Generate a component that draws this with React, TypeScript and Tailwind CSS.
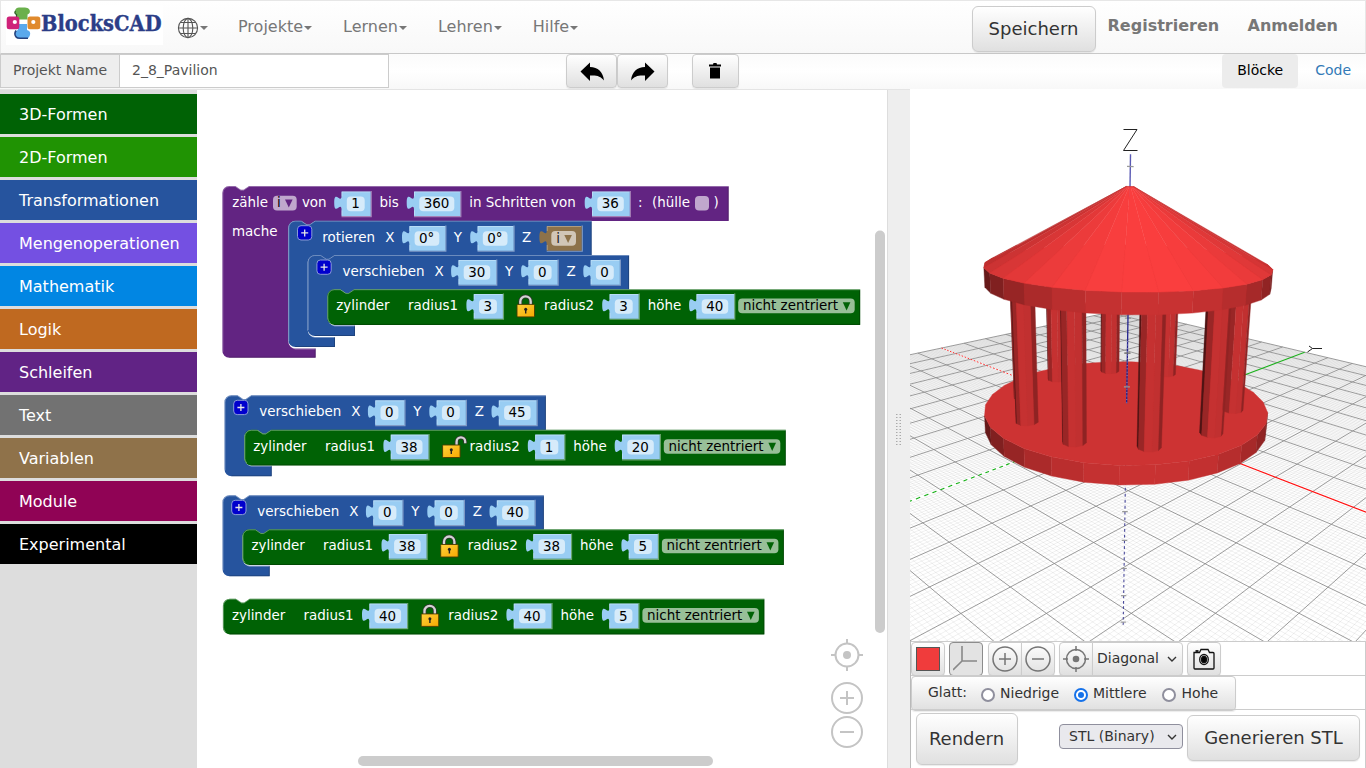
import React from "react";

/* ---------- 3D view: camera and projection ---------- */

const FOCAL = 666.3;
const CX = 1138;
const CY = 365;
const AZ = (43.5 * Math.PI) / 180;
const CA = Math.cos(AZ);
const SA = Math.sin(AZ);
const ST = 0.9527;
const CT = 0.304;
const SB = 0.0197;

type V3 = [number, number, number];
type P2 = [number, number];

function rotate([x, y, z]: V3): V3 {
  const x1 = x * CA + y * SA;
  const y1 = -x * SA + y * CA;
  const x2 = x1 + z * SB;
  const z2 = z - x1 * SB;
  return [x2, y1 * CT + z2 * ST, -y1 * ST + z2 * CT];
}

function project(p: V3): P2 {
  const [x, y, z] = rotate(p);
  const depth = 192.3 - z;
  return [CX + (FOCAL * (x - 3.35)) / depth, CY - (FOCAL * (y - 15.73)) / depth];
}

const pt = (p: V3) => {
  const [x, y] = project(p);
  return `${x.toFixed(2)},${y.toFixed(2)}`;
};

const seg = (a: V3, b: V3) => `M${pt(a)}L${pt(b)}`;

function shade(n: V3): string {
  const [x, y, z] = rotate(n);
  const i = Math.max(0.25, Math.min(1, 0.287 + 0.09 * x + 0.351 * y + 0.65 * z));
  return `rgb(${Math.round(250 * i)},${Math.round(62 * i)},${Math.round(62 * i)})`;
}

interface Face {
  pts: string;
  fill: string;
}

function frustum(cx: number, cy: number, z0: number, z1: number, r0: number, r1: number, sides: number, turn: number): Face[] {
  const faces: Face[] = [];
  const at = (k: number, r: number, z: number): V3 => {
    const a = turn + (k * 2 * Math.PI) / sides;
    return [cx + r * Math.cos(a), cy + r * Math.sin(a), z];
  };
  for (let k = 0; k < sides; k++) {
    const q = [at(k, r0, z0), at(k + 1, r0, z0), at(k + 1, r1, z1), at(k, r1, z1)];
    const s = q.map(project);
    let area = 0;
    s.forEach((a, j) => {
      const b = s[(j + 1) % 4];
      area += a[0] * b[1] - b[0] * a[1];
    });
    if (area >= 0) continue;
    const mid = turn + ((k + 0.5) * 2 * Math.PI) / sides;
    const dz = z1 - z0;
    const dr = r0 - r1;
    const len = Math.hypot(dz, dr);
    faces.push({
      pts: q.map(pt).join(" "),
      fill: shade([(Math.cos(mid) * dz) / len, (Math.sin(mid) * dz) / len, dr / len]),
    });
  }
  const top: V3[] = Array.from({ length: sides }, (_, k) => at(k, r1, z1));
  faces.push({ pts: top.map(pt).join(" "), fill: shade([0, 0, 1]) });
  return faces;
}

function Solid({ faces }: { faces: Face[] }) {
  return (
    <g>
      {faces.map((f, i) => (
        <polygon key={i} points={f.pts} fill={f.fill} stroke={f.fill} strokeWidth="0.4" strokeLinejoin="round" />
      ))}
    </g>
  );
}

const range = (a: number, b: number, step = 1) => {
  const out: number[] = [];
  for (let v = a; v <= b; v += step) out.push(v);
  return out;
};

const minorGrid = range(-100, 100)
  .filter((v) => v % 10 !== 0)
  .map((v) => seg([v, -100, 0], [v, 100, 0]) + seg([-100, v, 0], [100, v, 0]))
  .join("");
const majorGrid = range(-100, 100, 10)
  .filter((v) => v !== 0)
  .map((v) => seg([v, -100, 0], [v, 100, 0]) + seg([-100, v, 0], [100, v, 0]))
  .join("");

const base = frustum(0, 0, 0, 5, 39.8, 39.8, 30, 0);
const rim = frustum(0, 0, 40, 45, 38, 38, 30, 0);
const roof = frustum(0, 0, 45, 65, 38, 1, 30, 0);
const columns = range(1, 360, 36)
  .map((deg) => {
    const a = (deg * Math.PI) / 180;
    const x = 30 * Math.cos(a);
    const y = 30 * Math.sin(a);
    return { near: rotate([x, y, 0])[2], faces: frustum(x, y, 5, 40, 3, 3, 10, a) };
  })
  .sort((p, q) => p.near - q.near);

function Scene() {
  return (
    <svg className="block h-[552px] w-[456px] bg-white" viewBox="910 89 456 552">
      <path d={minorGrid} stroke="#000" strokeOpacity="0.08" strokeWidth="0.8" fill="none" />
      <path d={majorGrid} stroke="#8a8a8a" strokeOpacity="0.85" strokeWidth="1" fill="none" />
      <path d={range(-99, -1, 2).map((v) => seg([v - 1, 0, 0], [v, 0, 0])).join("")} stroke="#ff3030" strokeWidth="1" />
      <path d={range(-99, -1, 2).map((v) => seg([0, v - 1, 0], [0, v, 0])).join("")} stroke="#10b010" strokeWidth="1.1" />
      <path d={seg([0, 0, 0], [100, 0, 0])} stroke="#ff1010" strokeWidth="1.2" />
      <path d={seg([0, 0, 0], [0, 100, 0])} stroke="#20b020" strokeWidth="1.2" />
      <path d={range(-71, -1, 2).map((v) => seg([0, 0, v], [0, 0, v + 1])).join("")} stroke="#4a4a9c" strokeWidth="1.1" />
      <path d={seg([0, 0, 60], [0, 0, 73])} stroke="#5a5ab4" strokeWidth="1.4" />
      {range(-70, 70, 10).map((v) => (
        <path key={v} d={seg([-0.6, -0.6, v], [0.6, 0.6, v])} stroke="#999" strokeWidth="1.2" />
      ))}
      <path d="M1123.500 129.500h13.500l-13.500 21h14" stroke="#222" strokeWidth="1" fill="none" />
      <path d="M1322 348.500h-9.500l-5 3.500M1312.500 348.500l-3.500-2.500" stroke="#222" strokeWidth="1" fill="none" />
      <Solid faces={base} />
      <path d={seg([0, 0, 5], [0, 0, 40])} stroke="#25258f" strokeWidth="1.3" />
      <path d={seg([0, 0, 5], [0, 0, 24])} stroke="#a0a0c8" strokeOpacity="0.6" strokeWidth="1.400" strokeDasharray="1 2.400" />
      <path d={seg([-0.6, -0.6, 10], [0.6, 0.6, 10])} stroke="#999" strokeWidth="1.200" />
      <path d={seg([-0.6, -0.6, 20], [0.6, 0.6, 20])} stroke="#777" strokeWidth="1.200" />
      {columns.map((c, i) => (
        <Solid key={i} faces={c.faces} />
      ))}
      <Solid faces={rim} />
      <Solid faces={roof} />
    </svg>
  );
}

/* ---------- Block workspace ---------- */

const FONT = '"DejaVu Sans", sans-serif';
const BLUE = "#26549e";
const GREEN = "#006205";
const PURPLE = "#622482";

function T({ x, y, children, fill = "#fff" }: { x: number; y: number; children: React.ReactNode; fill?: string }) {
  return (
    <text x={x + 0.5} y={y} fill={fill} fontSize="13.45" fontFamily={FONT} xmlSpace="preserve">
      {children}
    </text>
  );
}

const NOTCH = "l5.500 3.700h2.800l5.500-3.700";
const NOTCH_BACK = "l-5.500 3.700h-2.800l-5.500-3.700";

interface CShape {
  x: number;
  y: number;
  right: number;
  head: number;
  inner: number;
  armTop: number;
  bottom: number;
  armRight: number;
  color: string;
}

function CBlock({ x, y, right, head, inner, armTop, bottom, armRight, color }: CShape) {
  const d =
    `M${x} ${y + 7}a7 7 0 0 1 7-7h6${NOTCH}H${right}V${head + 0.5}H${inner + 26.8}${NOTCH_BACK}H${inner + 7}a7 7 0 0 0-7 7V${armTop - 7}` +
    `a7 7 0 0 0 7 7H${armRight}V${bottom}H${x + 7}a7 7 0 0 1-7-7Z`;
  return (
    <g>
      <path d={d} fill={color} />
      <path d={`M${x + 0.5} ${bottom - 6}V${y + 7}a6.500 6.500 0 0 1 6.500-6.500h6${NOTCH}H${right}`} fill="none" stroke="#fff" strokeOpacity="0.32" />
      <path d={`M${inner + 2} ${armTop - 3}a7 7 0 0 0 5 3.500H${armRight}`} fill="none" stroke="#fff" strokeOpacity="0.35" />
      <path d={`M${right - 0.5} ${y + 1}V${head}M${armRight - 0.5} ${armTop}V${bottom - 0.5}H${x + 7}`} fill="none" stroke="#000" strokeOpacity="0.2" />
    </g>
  );
}

function FlatBlock({ x, y, right, bottom, color }: { x: number; y: number; right: number; bottom: number; color: string }) {
  return (
    <g>
      <path d={`M${x} ${y + 7}a7 7 0 0 1 7-7h6${NOTCH}H${right}V${bottom}H${x + 7}a7 7 0 0 1-7-7Z`} fill={color} />
      <path
        d={`M${x + 2.5} ${bottom - 2.5}a7 7 0 0 1-2-4.500V${y + 7}a6.500 6.500 0 0 1 6.500-6.500h6${NOTCH}H${right}`}
        fill="none"
        stroke="#fff"
        strokeOpacity="0.36"
      />
      <path d={`M${right - 0.5} ${y + 1}V${bottom - 0.5}H${x + 7}`} fill="none" stroke="#000" strokeOpacity="0.25" />
    </g>
  );
}

function Plug({ x, y, w, color, children }: { x: number; y: number; w: number; color: string; children?: React.ReactNode }) {
  const d = `M${x} ${y}h${w}v24.700h${-w}v-6.500c0-9.200-7.300 7.300-7.300-6.900s7.300 2.300 7.300-6.900Z`;
  return (
    <g>
      <path d={`M${x} ${y + 25.2}h${w + 0.5}v${-25.7}`} fill="none" stroke="#fff" strokeOpacity="0.42" strokeWidth="1.3" />
      <path d={d} fill={color} />
      <path d={`M${x + 0.5} ${y + 24}v-5M${x + 0.5} ${y + 5}v-4.500h${w - 1}`} fill="none" stroke="#fff" strokeOpacity="0.3" />
      {children}
    </g>
  );
}

const plugWidth = (v: string) => (v.endsWith("°") ? 36 : v.length === 3 ? 46.3 : v.length === 2 ? 37.8 : 29.2);

function NumberPlug({ x, y, value }: { x: number; y: number; value: string }) {
  const w = plugWidth(value);
  return (
    <Plug x={x} y={y} w={w} color="#99cdf3">
      <rect x={x + 5.3} y={y + 5.2} width={w - 11.3} height="14.600" rx="4" fill="#d6ebfa" />
      <text x={x + w / 2 - 0.6} y={y + 17} textAnchor="middle" fill="#000" fontSize="13.45" fontFamily={FONT}>
        {value}
      </text>
    </Plug>
  );
}

function Plus({ x, y }: { x: number; y: number }) {
  return (
    <g>
      <rect x={x + 0.5} y={y + 0.5} width="14.300" height="14.300" rx="3.500" fill="#0000cd" stroke="#8a9ad8" />
      <path d={`M${x + 4.2} ${y + 7.7}h7M${x + 7.7} ${y + 4.2}v7`} stroke="#e6e6e6" strokeWidth="1.300" />
    </g>
  );
}

function Lock({ x, y, open = false }: { x: number; y: number; open?: boolean }) {
  return (
    <g transform={`translate(${x} ${y})`}>
      <g fill="none">
        <path
          d={open ? "M14.500 9.500V6.200a4.300 4.300 0 0 1 8.600 0V8" : "M3.800 10V6.700a5.200 5.200 0 0 1 10.400 0V10"}
          stroke="#333"
          strokeWidth="3.800"
        />
        <path
          d={open ? "M14.500 9.500V6.200a4.300 4.300 0 0 1 8.600 0V7.700" : "M3.800 10V6.700a5.200 5.200 0 0 1 10.400 0V10"}
          stroke="#d4d4d4"
          strokeWidth="2.300"
        />
      </g>
      <rect x="0.500" y="9.500" width="17.500" height="12.500" rx="0.800" fill="url(#gold)" stroke="#4a3a00" strokeWidth="0.900" />
      <circle cx="9.200" cy="14.300" r="1.500" fill="#222" />
      <path d="M9.200 14.500v4" stroke="#222" strokeWidth="1.400" />
    </g>
  );
}

function Cylinder({ x, y, r1, r2, h, open = false, height = 35.7 }: { x: number; y: number; r1: string; r2: string; h: string; open?: boolean; height?: number }) {
  const p1 = x + 146.4;
  const e1 = p1 + plugWidth(r1);
  const p2 = e1 + 106.6;
  const e2 = p2 + plugWidth(r2);
  const p3 = e2 + 57.7;
  const dd = p3 + plugWidth(h) + 4;
  const by = y + 20.8;
  return (
    <g>
      <FlatBlock x={x} y={y} right={dd + 122} bottom={y + height} color={GREEN} />
      <T x={x + 8.5} y={by}>zylinder</T>
      <T x={x + 80.1} y={by}>radius1</T>
      <NumberPlug x={p1} y={y + 4.8} value={r1} />
      <Lock x={e1 + 13.6} y={y + 5.7} open={open} />
      <T x={e1 + 40.6} y={by}>radius2</T>
      <NumberPlug x={p2} y={y + 4.8} value={r2} />
      <T x={e2 + 8.5} y={by}>höhe</T>
      <NumberPlug x={p3} y={y + 4.8} value={h} />
      <rect x={dd} y={y + 9.4} width="116.500" height="14.600" rx="4" fill="#98bf98" />
      <T x={dd + 4.2} y={by} fill="#000">nicht zentriert</T>
      <path d={`M${dd + 104.6} ${y + 13}h7.600l-3.800 8.200z`} fill={GREEN} />
    </g>
  );
}

function Translate({ x, y, vx, vy, vz }: { x: number; y: number; vx: string; vy: string; vz: string }) {
  const p1 = x + 150.7;
  const e1 = p1 + plugWidth(vx);
  const p2 = e1 + 32.2;
  const e2 = p2 + plugWidth(vy);
  const p3 = e2 + 33;
  const e3 = p3 + plugWidth(vz);
  const by = y + 20.8;
  return (
    <g>
      <CBlock x={x} y={y} right={e3 + 9.3} head={y + 34.3} inner={x + 20} armTop={y + 70.5} bottom={y + 81} armRight={x + 47.3} color={BLUE} />
      <Plus x={x + 8.7} y={y + 4.5} />
      <T x={x + 34.3} y={by}>verschieben</T>
      <T x={x + 126.2} y={by}>X</T>
      <NumberPlug x={p1} y={y + 5} value={vx} />
      <T x={e1 + 8.4} y={by}>Y</T>
      <NumberPlug x={p2} y={y + 5} value={vy} />
      <T x={e2 + 8.4} y={by}>Z</T>
      <NumberPlug x={p3} y={y + 5} value={vz} />
    </g>
  );
}

function Workspace() {
  return (
    <svg className="block h-[678px] w-[690px]" viewBox="197 90 690 678">
      <defs>
        <linearGradient id="gold" x1="0" y1="0" x2="1" y2="1">
          <stop offset="0" stopColor="#ffd23c" />
          <stop offset="1" stopColor="#f7a800" />
        </linearGradient>
      </defs>

      <CBlock x={222.3} y={186} right={728.7} head={220.5} inner={288.3} armTop={348.5} bottom={357.7} armRight={315.7} color={PURPLE} />
      <T x={231.8} y={207}>zähle</T>
      <rect x="273" y="195.800" width="23.700" height="14.600" rx="4" fill="#c0a7cd" />
      <T x={276.5} y={207} fill="#000">i</T>
      <path d="M285 199.500h7.600l-3.800 8z" fill={PURPLE} />
      <T x={301.4} y={207}>von</T>
      <NumberPlug x={341.5} y={191.4} value="1" />
      <T x={379} y={207}>bis</T>
      <NumberPlug x={414} y={191.4} value="360" />
      <T x={468.8} y={207}>in Schritten von</T>
      <NumberPlug x={592} y={191.4} value="36" />
      <T x={637.5} y={207}>:</T>
      <T x={651.6} y={207}>(hülle</T>
      <rect x="695" y="195.900" width="14" height="14.700" rx="4" fill="#c0a7cd" />
      <T x={713} y={207}>)</T>
      <T x={231.5} y={236}>mache</T>

      <CBlock x={288.3} y={220.7} right={591.7} head={255} inner={307.7} armTop={337} bottom={347} armRight={335} color={BLUE} />
      <Plus x={297} y={225.2} />
      <T x={321.7} y={242}>rotieren</T>
      <T x={384.7} y={242}>X</T>
      <NumberPlug x={409.3} y={226} value="0°" />
      <T x={453.3} y={242}>Y</T>
      <NumberPlug x={477.5} y={226} value="0°" />
      <T x={521.6} y={242}>Z</T>
      <Plug x={546.7} y={226} w={35} color="#8d724a">
        <rect x="551.300" y="231" width="24.700" height="14.700" rx="4" fill="#d1c6b7" />
        <T x={555.8} y={243} fill="#222">i</T>
        <path d="M564.300 235h7.600l-3.800 8z" fill="#8d724a" />
      </Plug>

      <Translate x={307.7} y={255} vx="30" vy="0" vz="0" />
      <Cylinder x={327.3} y={289.2} r1="3" r2="3" h="40" />

      <Translate x={224.5} y={395.3} vx="0" vy="0" vz="45" />
      <Cylinder x={244.3} y={429.8} r1="38" r2="1" h="20" open />

      <Translate x={222.5} y={495.3} vx="0" vy="0" vz="40" />
      <Cylinder x={242.4} y={529.3} r1="38" r2="38" h="5" />

      <Cylinder x={222.9} y={598.7} r1="40" r2="40" h="5" />

      <g fill="none" stroke="#c4c4c4" strokeWidth="2">
        <circle cx="847" cy="655" r="11.500" />
        <circle cx="847" cy="655" r="4" fill="#c4c4c4" stroke="none" />
        <path d="M847 639v5M847 666v5M831 655h5M858 655h5" />
        <circle cx="847" cy="698" r="15" />
        <path d="M840 698h14M847 691v14" />
        <circle cx="847" cy="732" r="15" />
        <path d="M840 732h14" />
      </g>
      <rect x="875" y="230.500" width="10" height="402.500" rx="5" fill="#ccc" />
      <rect x="358" y="756" width="355" height="10" rx="5" fill="#ccc" />
    </svg>
  );
}

/* ---------- Page chrome ---------- */

const categories: [string, string][] = [
  ["3D-Formen", "bg-[#006205]"],
  ["2D-Formen", "bg-[#209303]"],
  ["Transformationen", "bg-[#26549e]"],
  ["Mengenoperationen", "bg-[#7450e2]"],
  ["Mathematik", "bg-[#0186e3]"],
  ["Logik", "bg-[#bf6920]"],
  ["Schleifen", "bg-[#612385]"],
  ["Text", "bg-[#727272]"],
  ["Variablen", "bg-[#8f724a]"],
  ["Module", "bg-[#900355]"],
  ["Experimental", "bg-black"],
];

const BTN = "flex items-center justify-center border border-[#ccc] bg-gradient-to-b from-white to-[#e0e0e0] text-[#333] shadow-[0_1px_1px_rgba(0,0,0,0.08)]";

function Caret() {
  return <span className="ml-[1px] mt-[2px] border-x-4 border-t-4 border-x-transparent border-t-[#777]" />;
}

function Logo() {
  return (
    <svg className="block h-[40px] w-[157px] overflow-visible bg-white" viewBox="6 5 157 40">
      <path d="M15 10.500q-1.500 3 1.500 4v5h11v-5q4-2 1.500-5.500-1-1.500-4-1.500h-6q-3 0-4 3z" fill="#6ab04c" />
      <path d="M15.500 11q-1.500 2.500 1 3.500v4" fill="none" stroke="#2f5a26" strokeWidth="1.200" />
      <path d="M17 24h10v6q4 1 3 5-1 3.500-4 3.500h-7q-4 0-4-4t3-4.500z" fill="#5aa9ec" />
      <path d="M16 30.500q-2.500 4 .5 6.800 1 .9 3.500 1h8" fill="none" stroke="#24427e" strokeWidth="1.600" />
      <rect x="6.700" y="16.500" width="12.600" height="12.800" rx="2.500" fill="#cf2279" />
      <circle cx="14.800" cy="22" r="2.100" fill="#fff" />
      <rect x="27.500" y="16.500" width="12.800" height="12.800" rx="2.500" fill="#e08a2c" />
      <circle cx="33.300" cy="22" r="2.100" fill="#fff" />
      <text x="41" y="31.300" textLength="120.500" lengthAdjust="spacingAndGlyphs" fill="#2b3d87" stroke="#2b3d87" strokeWidth="0.400" fontSize="22" fontWeight="700" fontFamily='"DejaVu Serif", serif'>
        BlocksCAD
      </text>
    </svg>
  );
}

function Globe() {
  return (
    <svg className="h-[22px] w-[22px]" viewBox="0 0 22 22" fill="none" stroke="#555" strokeWidth="1.100">
      <circle cx="11" cy="11" r="9.600" />
      <ellipse cx="11" cy="11" rx="4.800" ry="9.600" />
      <path d="M11 1.400v19.200M1.400 11h19.200M3.300 5.500h15.400M3.300 16.500h15.400" />
    </svg>
  );
}

const Chevron = () => (
  <svg className="h-[6px] w-[10px]" viewBox="0 0 10 6" fill="none" stroke="#333" strokeWidth="1.400">
    <path d="M1 1l4 4 4-4" />
  </svg>
);

function Radio({ on = false }: { on?: boolean }) {
  return on ? (
    <span className="mt-[3px] flex h-[14px] w-[14px] items-center justify-center rounded-full border-2 border-[#1672ea] bg-white">
      <span className="h-[6px] w-[6px] rounded-full bg-[#1672ea]" />
    </span>
  ) : (
    <span className="mt-[3px] h-[14px] w-[14px] rounded-full border-2 border-[#8f8f9d] bg-white" />
  );
}

export default function App() {
  return (
    <div className="flex h-[768px] w-[1366px] flex-col overflow-hidden bg-white font-['DejaVu_Sans',sans-serif] text-[14px] text-[#333]">
      <header className="flex h-[54px] shrink-0 border border-[#e7e7e7] border-b-[#c8c8c8] bg-gradient-to-b from-white to-[#f8f8f8] text-[16px] text-[#777]">
        <div className="ml-[5px] mt-[4px]">
          <Logo />
        </div>
        <div className="ml-[14px] mt-[16px] flex h-[22px] items-center">
          <Globe />
          <span className="-mt-[2px] flex"><Caret /></span>
        </div>
        <nav className="mt-[14px] flex h-[24px] items-center">
          <span className="ml-[30px] flex items-center">Projekte<Caret /></span>
          <span className="ml-[31px] flex items-center">Lernen<Caret /></span>
          <span className="ml-[31px] flex items-center">Lehren<Caret /></span>
          <span className="ml-[31px] flex items-center">Hilfe<Caret /></span>
        </nav>
        <div className="ml-auto flex">
          <button className={`${BTN} mt-[5px] h-[46px] w-[124px] rounded-[6px] pb-[2px] text-[18px]`}>Speichern</button>
          <span className="ml-[12px] mt-[13px] w-[112px] font-bold leading-[24px]">Registrieren</span>
          <span className="ml-[28px] mr-[27px] mt-[13px] font-bold leading-[24px]">Anmelden</span>
        </div>
      </header>

      <div className="flex h-[36px] shrink-0 border-b border-[#e4e4e4] bg-gradient-to-b from-[#fbfbfb] via-white to-[#f8f8f8]">
        <div className="flex h-[34px] w-[389px] border border-[#ccc] bg-white text-[#555]">
          <span className="flex w-[119px] items-center border-r border-[#ccc] bg-[#eee] pb-[2px] pl-[12px]">Projekt Name</span>
          <span className="flex items-center pb-[2px] pl-[12px]">2_8_Pavilion</span>
        </div>
        <div className="ml-[177px] flex h-[34px]">
          <button className={`${BTN} w-[51px] rounded-[4px]`}>
            <svg className="mt-[2px] h-[20px] w-[26px]" viewBox="0 0 26 20">
              <path d="M1.500 9.500L11 0.500V5c8 .5 13 4.500 14 13.500-3.500-4.500-7.500-5.500-14-5V19z" fill="#000" />
            </svg>
          </button>
          <button className={`${BTN} w-[51px] rounded-[4px]`}>
            <svg className="mt-[2px] h-[20px] w-[26px]" viewBox="0 0 26 20">
              <path d="M24.500 9.500L15 0.500V5C7 5.500 2 9.500 1 18.500c3.500-4.500 7.500-5.500 14-5V19z" fill="#000" />
            </svg>
          </button>
          <button className={`${BTN} ml-[24px] w-[47px] rounded-[4px] pr-px`}>
            <svg className="-mt-px h-[16px] w-[12px]" viewBox="0 0 12 16">
              <path d="M0 1.500h4l.5-1.500h3L8 1.500h4v2H0zM1 4.500h10v11H1z" fill="#000" />
            </svg>
          </button>
        </div>
        <div className="ml-auto flex h-[34px] pr-[15px]">
          <span className="flex w-[76px] items-center justify-center rounded-[4px] bg-[#ececec] pb-[2px] text-black">Blöcke</span>
          <span className="ml-[17px] flex items-center pb-[2px] text-[#337ab7]">Code</span>
        </div>
      </div>

      <div className="flex min-h-0 flex-1">
        <aside className="flex w-[197px] shrink-0 flex-col gap-[3px] bg-[#ddd] pt-[4px]">
          {categories.map(([name, color]) => (
            <div key={name} className={`flex h-[40px] items-center pl-[19px] pt-[2px] text-[16px] text-white ${color}`}>
              {name}
            </div>
          ))}
        </aside>
        <main className="w-[690px] shrink-0">
          <Workspace />
        </main>
        <div className="flex w-[23px] shrink-0 items-center justify-center border-l border-[#ddd] bg-[#eee]">
          <svg className="h-[31px] w-[6px]" viewBox="0 0 6 31">
            {range(0, 30, 3).map((v) => (
              <path key={v} d={`M0 ${v + 0.5}h1.500M3.500 ${v + 0.5}h1.500`} stroke="#aaa" />
            ))}
          </svg>
        </div>

        <section className="-mt-px flex w-[456px] shrink-0 flex-col bg-white">
          <Scene />
          <div className="flex flex-1 flex-col border-x border-[#bbb] border-r-[#ccc]">
            <div className="flex h-[34px] shrink-0 border-t border-[#ccc]">
              <button className={`${BTN} h-[34px] w-[34px] rounded-[4px]`}>
                <span className="h-[24px] w-[24px] border border-[#555] bg-[#f03c3c]" />
              </button>
              <button className="ml-[4px] flex h-[34px] w-[34px] items-center justify-center rounded-[4px] border border-[#8c8c8c] bg-[#e3e3e3]">
                <svg className="h-[26px] w-[26px]" viewBox="0 0 26 26" fill="none" stroke="#888" strokeWidth="1.600">
                  <path d="M9 0v15h15M9 15l-9 9" />
                </svg>
              </button>
              <button className={`${BTN} ml-[5px] h-[34px] w-[34px] rounded-l-[4px]`}>
                <svg className="h-[26px] w-[26px] shrink-0" viewBox="0 0 26 26" fill="none" stroke="#757575" strokeWidth="1.500">
                  <circle cx="13" cy="13" r="12" />
                  <path d="M7 13h12M13 7v12" />
                </svg>
              </button>
              <button className={`${BTN} -ml-px h-[34px] w-[34px] rounded-r-[4px]`}>
                <svg className="h-[26px] w-[26px] shrink-0" viewBox="0 0 26 26" fill="none" stroke="#757575" strokeWidth="1.500">
                  <circle cx="13" cy="13" r="12" />
                  <path d="M7 13h12" />
                </svg>
              </button>
              <button className={`${BTN} ml-[4px] h-[34px] w-[34px] rounded-l-[4px]`}>
                <svg className="h-[26px] w-[26px] shrink-0" viewBox="0 0 26 26" fill="none" stroke="#757575" strokeWidth="1.500">
                  <circle cx="13" cy="13" r="9.500" />
                  <circle cx="13" cy="13" r="3.300" fill="#757575" stroke="none" />
                  <path d="M13 0v5M13 21v5M0 13h5M21 13h5" />
                </svg>
              </button>
              <button className={`${BTN} -ml-px h-[34px] w-[91px] rounded-r-[4px] pr-px`}>
                <span className="pb-[2px]">Diagonal</span>
                <span className="ml-[8px] flex"><Chevron /></span>
              </button>
              <button className={`${BTN} ml-[4px] h-[34px] w-[34px] rounded-[4px] pr-px`}>
                <svg className="h-[22px] w-[22px] shrink-0" viewBox="0 0 22 22" fill="none" stroke="#111" strokeWidth="1.300">
                  <path d="M1 4.500h5.500L8 1.500h7l1.500 3H20a1 1 0 0 1 1 1V20a1 1 0 0 1-1 1H2a1 1 0 0 1-1-1z" />
                  <path d="M2.500 3h3" strokeWidth="1.800" />
                  <ellipse cx="11" cy="11.500" rx="4.300" ry="5" />
                  <ellipse cx="11" cy="11.500" rx="2.500" ry="3.200" fill="#000" />
                </svg>
              </button>
            </div>
            <div className="flex h-[34px] shrink-0 border-t border-[#ccc]">
              <div className={`${BTN} h-[35px] w-[325px] !justify-start rounded-[4px] pl-[16px]`}>
                <span className="pb-[2px]">Glatt:</span>
                <span className="ml-[14px] flex items-center gap-[5px]"><Radio /><span className="pb-px">Niedrige</span></span>
                <span className="ml-[15px] flex items-center gap-[5px]"><Radio on /><span className="pb-px">Mittlere</span></span>
                <span className="ml-[15px] flex items-center gap-[6px]"><Radio /><span className="pb-px">Hohe</span></span>
              </div>
            </div>
            <div className="flex flex-1 border-t border-[#ccc]">
              <button className={`${BTN} ml-[5px] mt-[3px] h-[52px] w-[102px] rounded-[6px] pb-[2px] pr-px text-[18px]`}>Rendern</button>
              <div className="ml-[41px] mt-[14px] flex h-[25px] w-[124px] items-center rounded-[4px] border border-[#8f8f9d] bg-[#e9e9ed] pl-[9px]">
                <span className="pb-px">STL (Binary)</span>
                <span className="ml-auto mr-[5px]"><Chevron /></span>
              </div>
              <button className={`${BTN} ml-[4px] mt-[5px] h-[46px] w-[173px] rounded-[6px] pb-[2px] text-[18px]`}>Generieren STL</button>
            </div>
          </div>
        </section>
      </div>
    </div>
  );
}
